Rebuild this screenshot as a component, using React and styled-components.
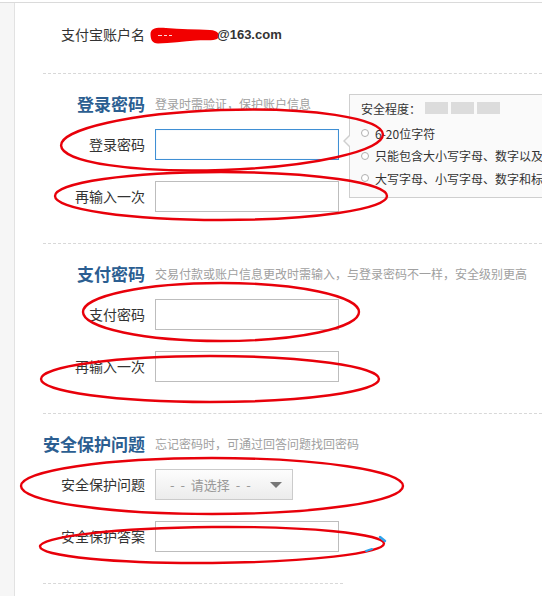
import React from 'react';
import styled, { createGlobalStyle } from 'styled-components';

const Global = createGlobalStyle`
  html, body { margin: 0; padding: 0; background: #fff; }
  body {
    font-family: "Noto Sans CJK SC", "Noto Sans", "Liberation Sans", sans-serif;
    overflow: hidden;
    color: #333;
  }
`;

const Page = styled.div`
  position: relative;
  width: 542px;
  height: 596px;
  overflow: hidden;
  padding-top: 2px;
  box-sizing: border-box;
  background: #fff;
`;

const Frame = styled.div`
  display: flex;
  height: 594px;
  border-top: 1px solid #dadada;
`;

const Side = styled.div`
  width: 14px;
  flex: none;
  background: #f6f6f6;
  border-right: 1px solid #e2e2e2;
`;

const Main = styled.div`
  flex: 1;
  min-width: 0;
  padding-left: 28px;
  position: relative;
  overflow: hidden;
`;

const Row = styled.div`
  display: grid;
  grid-template-columns: 102px auto;
  column-gap: ${p => p.$gap || 10}px;
  align-items: center;
  justify-content: start;
  height: ${p => p.$h || 31}px;
`;

const AccountRow = styled(Row)`
  margin-top: 22px;
  margin-bottom: 28px;
`;

const Label = styled.div`
  justify-self: end;
  white-space: nowrap;
  font-size: 14px;
  line-height: 20px;
  color: #333;
  margin-top: -2px;
`;

const Account = styled.div`
  display: flex;
  align-items: center;
  font-family: "Liberation Sans", Arial, sans-serif;
  font-weight: bold;
  font-size: 13px;
  color: #333;
  line-height: 20px;
`;

const Section = styled.section`
  position: relative;
  border-top: 1px dashed #d8d8d8;
  padding: 19px 0 31px;
`;

const EndRule = styled.div`
  width: 300px;
  border-top: 1px dashed #d8d8d8;
`;

const Heading = styled.h2`
  margin: 0;
  justify-self: end;
  white-space: nowrap;
  font-size: 17px;
  line-height: 22px;
  font-weight: bold;
  color: #2b5e91;
`;

const Hint = styled.span`
  white-space: nowrap;
  font-size: 12px;
  line-height: 22px;
  color: #a0a0a0;
  margin-top: -1px;
`;

const Fields = styled.div`
  margin-top: 14px;
  display: flex;
  flex-direction: column;
  gap: 21px;
`;

const TextBox = styled.input`
  display: block;
  width: 184px;
  height: 31px;
  box-sizing: border-box;
  margin: 0;
  padding: 0 6px;
  border: 1px solid ${p => (p.$focus ? '#3f8fd4' : '#bdbdbd')};
  box-shadow: ${p => (p.$focus ? 'inset 0 0 1px rgba(63,143,212,0.4)' : 'none')};
  background: #fff;
  outline: none;
  font-size: 14px;
`;

const Select = styled.div`
  width: 138px;
  height: 31px;
  box-sizing: border-box;
  border: 1px solid #cbcbcb;
  background: linear-gradient(#fdfdfd, #ececec);
  display: flex;
  align-items: center;
  justify-content: space-between;
  padding: 0 10px 0 14px;
  font-size: 13px;
  color: #999;
  white-space: nowrap;
  word-spacing: 3px;
`;

const Caret = styled.span`
  width: 0;
  height: 0;
  border-left: 6px solid transparent;
  border-right: 6px solid transparent;
  border-top: 6px solid #777;
`;

const Tip = styled.div`
  position: absolute;
  top: 20px;
  left: 306px;
  width: 240px;
  height: 104px;
  box-sizing: border-box;
  background: #fafafa;
  border: 1px solid #cfcfcf;
  padding: 4px 0 0 11px;
  font-size: 12px;
  color: #333;
  z-index: 1;

  &::before, &::after {
    content: "";
    position: absolute;
    top: 40px;
    width: 0;
    height: 0;
    border-top: 6px solid transparent;
    border-bottom: 6px solid transparent;
  }
  &::before {
    left: -7px;
    border-right: 6px solid #cfcfcf;
  }
  &::after {
    left: -5px;
    border-right: 6px solid #fafafa;
  }
`;

const TipTitle = styled.div`
  display: flex;
  align-items: center;
  height: 20px;
  line-height: 20px;
  white-space: nowrap;
`;

const Bars = styled.div`
  display: flex;
  gap: 3px;
  margin-left: 4px;
  margin-top: -3px;
`;

const Bar = styled.span`
  width: 23px;
  height: 12px;
  background: #dcdcdc;
`;

const TipList = styled.ul`
  list-style: none;
  margin: 3px 0 0;
  padding: 0;
`;

const TipItem = styled.li`
  display: flex;
  align-items: center;
  height: 22.5px;
  white-space: nowrap;
`;

const Dot = styled.span`
  width: 8px;
  height: 8px;
  flex: none;
  box-sizing: border-box;
  border: 1px solid #b0b0b0;
  border-radius: 50%;
  background: #fff;
  margin-right: 6px;
`;

const Blot = styled.svg`
  flex: none;
  display: block;
  margin-right: -3px;
`;

const Marks = styled.svg`
  position: absolute;
  top: 0;
  left: 0;
  pointer-events: none;
  z-index: 5;
`;

const ellipses = [
  { cx: 222, cy: 140, rx: 161, ry: 30, r: -2 },
  { cx: 221, cy: 196, rx: 166, ry: 24, r: 0 },
  { cx: 221, cy: 312, rx: 138, ry: 29, r: 0 },
  { cx: 210, cy: 379, rx: 169, ry: 23, r: 0 },
  { cx: 212, cy: 486, rx: 191, ry: 28, r: 0 },
  { cx: 212, cy: 545, rx: 172, ry: 18, r: -0.5 },
];

const Scribble = () => (
  <Blot width="70" height="17" viewBox="0 0 70 17">
    <path
      d="M0.5,7 C0.5,1.5 6,0 16,1 C30,2 46,2.5 60,3 C68,3.5 70,7 68,11 C66,14 58,13 46,13.5 C34,14 20,16.5 8,16.5 C2,16.5 0.5,12 0.5,7 Z"
      fill="#f20000"
    />
    <path d="M8,8.5 L12,8.5 M14,8.5 L17,8.5 M19,8.5 L22,8.5" stroke="#fff" strokeWidth="1" opacity="0.85" />
  </Blot>
);

export default function App() {
  return (
    <>
      <Global />
      <Page>
        <Frame>
          <Side />
          <Main>
            <AccountRow $gap={5} $h={20}>
              <Label>支付宝账户名</Label>
              <Account>
                <Scribble />
                <span>@163.com</span>
              </Account>
            </AccountRow>

            <Section>
              <Row $h={22}>
                <Heading>登录密码</Heading>
                <Hint>登录时需验证，保护账户信息</Hint>
              </Row>
              <Fields>
                <Row>
                  <Label>登录密码</Label>
                  <TextBox type="password" readOnly $focus />
                </Row>
                <Row>
                  <Label>再输入一次</Label>
                  <TextBox type="password" readOnly />
                </Row>
              </Fields>
              <Tip>
                <TipTitle>
                  安全程度：
                  <Bars>
                    <Bar />
                    <Bar />
                    <Bar />
                  </Bars>
                </TipTitle>
                <TipList>
                  <TipItem><Dot />6-20位字符</TipItem>
                  <TipItem><Dot />只能包含大小写字母、数字以及标点符号（除空格）</TipItem>
                  <TipItem><Dot />大写字母、小写字母、数字和标点符号至少包含2种</TipItem>
                </TipList>
              </Tip>
            </Section>

            <Section>
              <Row $h={22}>
                <Heading>支付密码</Heading>
                <Hint>交易付款或账户信息更改时需输入，与登录密码不一样，安全级别更高</Hint>
              </Row>
              <Fields>
                <Row>
                  <Label>支付密码</Label>
                  <TextBox type="password" readOnly />
                </Row>
                <Row>
                  <Label>再输入一次</Label>
                  <TextBox type="password" readOnly />
                </Row>
              </Fields>
            </Section>

            <Section>
              <Row $h={22}>
                <Heading>安全保护问题</Heading>
                <Hint>忘记密码时，可通过回答问题找回密码</Hint>
              </Row>
              <Fields>
                <Row>
                  <Label>安全保护问题</Label>
                  <Select>
                    <span>- - 请选择 - -</span>
                    <Caret />
                  </Select>
                </Row>
                <Row>
                  <Label>安全保护答案</Label>
                  <TextBox type="text" readOnly />
                </Row>
              </Fields>
            </Section>
            <EndRule />
          </Main>
        </Frame>

        <Marks width="542" height="596" viewBox="0 0 542 596">
          {ellipses.map((e, i) => (
            <ellipse
              key={i}
              cx={e.cx}
              cy={e.cy}
              rx={e.rx}
              ry={e.ry}
              transform={`rotate(${e.r} ${e.cx} ${e.cy})`}
              fill="none"
              stroke="#e8000a"
              strokeWidth="2.4"
            />
          ))}
          <path d="M380,537 L385,541" stroke="#2fa3ea" strokeWidth="2.5" strokeLinecap="round" />
          <path d="M366,551 L372,549" stroke="#2fa3ea" strokeWidth="2" strokeLinecap="round" />
        </Marks>
      </Page>
    </>
  );
}
